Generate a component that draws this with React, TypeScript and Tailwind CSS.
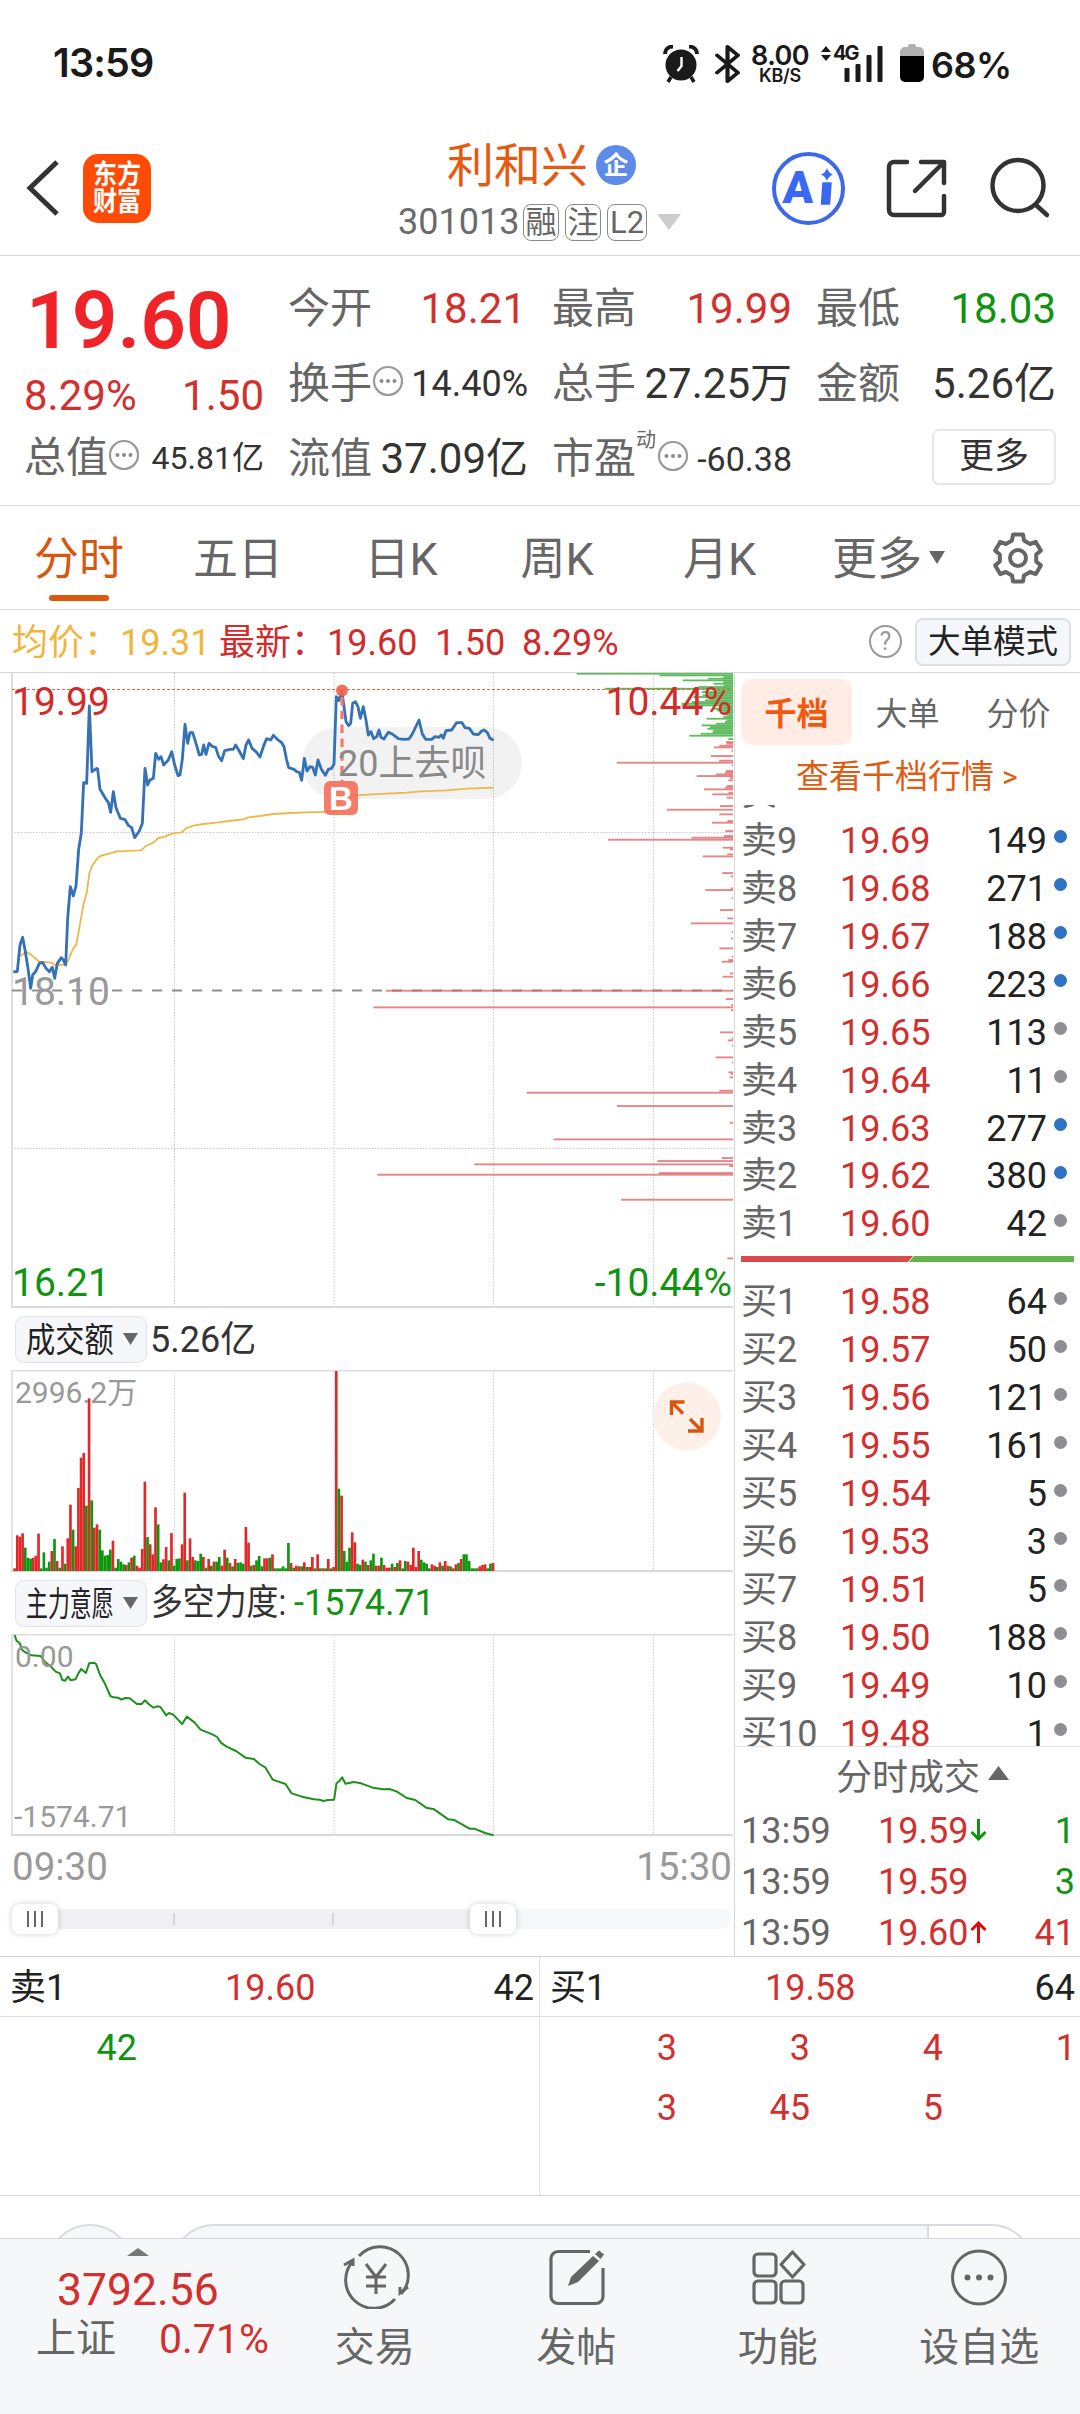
import React from "react";

/* ---------- chart data ---------- */

const PRICE_LINE =
  "40,936 52,934 60,855 68,832 76,875 84,925 92,985 98,945 108,933 118,910 128,907 138,925 148,935 157,922 164,955 172,910 184,893 190,900 197,915 203,775 211,680 220,708 228,678 236,568 244,518 251,368 260,370 268,138 276,335 290,325 293,327 300,388 316,415 325,427 332,457 340,395 348,443 361,475 374,478 386,497 395,503 404,533 418,513 427,490 435,325 443,375 450,360 460,355 467,280 476,298 483,290 491,315 505,300 515,275 524,315 534,347 540,345 547,298 555,193 563,250 570,218 578,218 588,250 598,285 605,283 611,255 618,283 627,250 638,260 647,262 656,290 665,302 674,272 690,268 700,268 707,255 716,270 730,296 738,255 746,240 756,265 768,275 780,291 790,260 800,236 812,240 820,226 832,238 845,248 852,260 860,300 866,323 882,328 890,335 898,337 905,361 913,295 921,333 930,320 938,322 946,345 954,300 964,328 976,346 985,328 995,325 1002,312 1009,110 1017,122 1025,90 1032,140 1038,185 1046,197 1052,190 1058,130 1066,125 1074,140 1081,175 1090,140 1098,180 1105,225 1113,215 1121,236 1130,230 1137,210 1143,232 1152,237 1165,217 1177,222 1195,236 1210,238 1227,237 1237,222 1257,180 1267,222 1277,238 1295,238 1305,230 1317,232 1324,225 1330,235 1338,212 1355,210 1370,188 1386,188 1395,203 1408,205 1420,222 1435,224 1445,213 1453,210 1462,218 1470,235 1481,241";

const AVG_LINE =
  "62,888 78,875 92,883 108,897 118,905 155,908 165,915 195,914 203,905 213,880 220,865 229,853 236,815 244,770 252,725 260,700 268,640 276,618 290,598 300,588 330,580 350,574 420,571 427,569 437,558 460,548 475,534 495,530 515,521 545,517 558,505 580,497 610,492 650,488 685,483 730,478 745,472 780,468 820,462 870,459 920,457 1002,455 1018,430 1030,415 1060,407 1100,404 1220,398 1260,394 1340,391 1400,386 1480,383";

const FORCE_LINE =
  "31,195 35,212 42,220 47,240 55,248 66,256 86,258 95,275 108,290 118,305 127,310 132,330 138,332 144,320 150,331 160,328 166,310 172,297 182,309 189,280 200,278 204,283 212,315 222,340 234,378 240,382 250,383 257,389 265,384 275,385 290,402 300,402 307,391 315,402 325,413 333,409 340,411 352,436 358,429 367,434 386,462 396,440 412,457 425,479 450,493 460,501 468,518 480,530 500,543 520,563 538,567 550,582 562,592 578,629 590,635 605,642 618,670 640,680 665,688 677,689 685,693 695,690 708,689 713,640 720,632 725,622 732,641 750,636 765,640 790,653 812,658 825,657 840,664 862,684 880,690 903,713 920,718 950,748 962,750 995,776 1005,776 1028,789 1046,796";

// [y, left edge] of every price-level bar, in thirds of a pixel
const SELL_DEPTH: number[][] = [
  [41, 890], [46, 1138], [51, 1330], [56, 1284], [61, 1208], [66, 1330], [71, 1300], [76, 1330], [81, 1255], [86, 975],
  [91, 1310], [96, 1265], [101, 1280], [106, 1268], [111, 1240], [116, 1290], [121, 1275], [126, 1235], [131, 1205], [136, 1205],
  [141, 1320], [146, 1300], [151, 1310], [156, 1330], [161, 1345], [166, 1340], [171, 1330], [176, 1280], [181, 1340], [186, 1335],
  [191, 1308], [196, 1265], [201, 1290], [206, 1282], [211, 1300], [216, 1298], [221, 1262], [227, 1228], [237, 1345],
];
const BUY_DEPTH: number[][] = [
  [246, 1338], [251, 1340], [257, 1318], [262, 1302], [272, 1354], [288, 1293], [302, 1317], [308, 1010], [316, 1355],
  [333, 1338], [338, 1335], [343, 1308], [348, 1250], [354, 1350], [361, 1345], [378, 1340], [383, 1335], [388, 1272], [398, 1345],
  [403, 1297], [413, 1340], [438, 1320], [449, 1161], [463, 1318], [483, 1342], [488, 1296], [513, 1336], [528, 1332],
  [533, 1235], [539, 984], [563, 1328], [568, 1350], [583, 1342], [589, 1268], [639, 1327], [649, 1352], [685, 1352],
  [690, 1276], [714, 1355], [750, 1320], [775, 1342], [790, 1233], [815, 1355], [835, 1353], [865, 1318], [890, 1355], [900, 1345], [905, 1325],
  [940, 1350], [950, 1328], [992, 318], [1017, 1338], [1042, 280], [1035, 1354], [1050, 1353], [1117, 1320], [1135, 1355], [1141, 1343],
  [1157, 1356], [1192, 1307], [1207, 1356], [1237, 1345], [1242, 1353], [1252, 1349], [1292, 1318], [1298, 740],
  [1338, 1011], [1388, 1349], [1438, 821], [1494, 1325], [1503, 1132], [1513, 583], [1518, 1348], [1539, 1137],
  [1544, 292], [1619, 1023], [1795, 1342],
];

// height followed by direction, one entry per minute
const VOLUME =
  "8r 107r 103r 113r 70g 39g 37g 40r 46r 112r 8g 56g 10g 28g 60r 96g 30r 10g 74r 22g 98r 199r 124g 74r 249r 340r 354r 196g 518r 212g 130r 140r 124g 62g 46g 48g 64g 91r 10g 36g 28g 20g 18r 26g 40r 46g 16r 10r 66r 268r 102g 80r 50r 191r 140g 26g 35r 72r 32g 114r 16g 36g 38g 80r 235r 32g 98r 42r 32g 30g 52g 42r 10g 36r 16g 28r 28g 42g 16r 64r 40g 24r 14g 36r 24g 26g 22g 132r 85r 16g 18r 32g 45g 14g 38r 38r 40g 50r 8g 8g 8g 14g 8g 84g 24r 10g 16r 14r 14g 26r 12g 12r 42r 8g 50r 8g 8r 8g 36r 8g 12r 600r 247g 226r 60g 28g 70g 116r 86r 22g 18g 34r 28g 18r 32g 52g 16r 16r 40g 18r 10r 10r 22g 12r 24g 32r 8g 30g 28r 18r 70r 12r 60r 34g 26g 22g 8g 20r 16r 12g 26r 16g 30r 16r 14g 8r 20r 24g 36r 50g 50g 30g 8g 8g 8g 14r 18r 20r 8g 22g 24r"
    .split(" ")
    .map((s) => ({ h: parseInt(s, 10) / 3, up: s.endsWith("r") }));

const SELLS: [string, string, string, boolean][] = [
  ["卖10", "", "", false],
  ["卖9", "19.69", "149", true],
  ["卖8", "19.68", "271", true],
  ["卖7", "19.67", "188", true],
  ["卖6", "19.66", "223", true],
  ["卖5", "19.65", "113", false],
  ["卖4", "19.64", "11", false],
  ["卖3", "19.63", "277", true],
  ["卖2", "19.62", "380", true],
  ["卖1", "19.60", "42", false],
];
const BUYS: [string, string, string, boolean][] = [
  ["买1", "19.58", "64", false],
  ["买2", "19.57", "50", false],
  ["买3", "19.56", "121", false],
  ["买4", "19.55", "161", false],
  ["买5", "19.54", "5", false],
  ["买6", "19.53", "3", false],
  ["买7", "19.51", "5", false],
  ["买8", "19.50", "188", false],
  ["买9", "19.49", "10", false],
  ["买10", "19.48", "1", false],
];

/* ---------- icons ---------- */

function AlarmIcon() {
  return (
    <svg width="36" height="38" viewBox="0 0 36 38" fill="none">
      <circle cx="18" cy="20" r="15.500" fill="#1a1a1a" />
      <path d="M2 9C2 5 5 1.500 10 1.500M34 9C34 5 31 1.500 26 1.500" stroke="#1a1a1a" strokeWidth="4" />
      <path d="M8 32l-3 5M28 32l3 5" stroke="#1a1a1a" strokeWidth="3.500" />
      <path d="M18.500 12v9l-4 5" stroke="#fff" strokeWidth="2.400" />
    </svg>
  );
}

function SignalIcon() {
  return (
    <svg width="64" height="38" viewBox="0 0 64 38" fill="#1a1a1a">
      <path d="M6 1l5 6H1zM6 16l5-6H1z" />
      <rect x="24.500" y="23" width="5" height="14" rx="1" />
      <rect x="35.500" y="19" width="5" height="18" rx="1" />
      <rect x="46.500" y="10" width="5" height="27" rx="1" />
      <rect x="57.500" y="1" width="5" height="36" rx="1" />
    </svg>
  );
}

function BatteryIcon() {
  return (
    <svg width="24" height="38" viewBox="0 0 24 38">
      <path d="M8 3a3 3 0 0 1 8 0h3a5 5 0 0 1 5 5v5H0V8a5 5 0 0 1 5-5z" fill="#b0b0b0" />
      <path d="M0 12h24v21a5 5 0 0 1-5 5H5a5 5 0 0 1-5-5z" fill="#000" />
    </svg>
  );
}

function gearPath() {
  const pts: string[] = [];
  const at = (r: number, deg: number) => {
    const a = (deg * Math.PI) / 180;
    pts.push(`${(27 + r * Math.cos(a)).toFixed(1)} ${(27 + r * Math.sin(a)).toFixed(1)}`);
  };
  for (let k = 0; k < 6; k++) {
    const c = k * 60 - 90;
    at(18.5, c - 19);
    at(24, c - 12);
    at(24, c + 12);
    at(18.5, c + 19);
  }
  return "M" + pts.join("L") + "Z";
}

function GearIcon() {
  return (
    <svg width="54" height="54" viewBox="0 0 54 54" fill="none" stroke="#666" strokeWidth="4" strokeLinejoin="round">
      <path d={gearPath()} />
      <circle cx="27" cy="27" r="8" />
    </svg>
  );
}

function DotsIcon() {
  return (
    <svg width="32" height="32" viewBox="0 0 32 32" className="mb-[6px] shrink-0" fill="none">
      <circle cx="16" cy="16" r="14" stroke="#999" strokeWidth="2.200" />
      <g fill="#8a8a8a">
        <circle cx="9.500" cy="16" r="2" />
        <circle cx="16" cy="16" r="2" />
        <circle cx="22.500" cy="16" r="2" />
      </g>
    </svg>
  );
}

function Grip() {
  return (
    <div className="flex h-[30px] w-[46px] items-center justify-center gap-[5px] rounded-lg bg-white shadow-[0_0_6px_rgba(0,0,0,0.18)]">
      <i className="h-4 w-[2px] bg-[#666]" />
      <i className="h-4 w-[2px] bg-[#666]" />
      <i className="h-4 w-[2px] bg-[#666]" />
    </div>
  );
}

/* ---------- sections ---------- */

function StatusBar() {
  return (
    <div className="flex h-[110px] items-start pl-[53px] font-['Inter',sans-serif] text-[#1a1a1a]">
      <div className="mt-[42px] w-[610px] text-[39.500px] leading-[43px] font-semibold tracking-[-0.8px]">13:59</div>
      <div className="mt-[45px] w-[51px]"><AlarmIcon /></div>
      <div className="mt-[45px] w-[36px]">
        <svg width="26" height="38" viewBox="5.500 1 12.500 22" preserveAspectRatio="none" fill="none" stroke="#1a1a1a" strokeWidth="2" strokeLinejoin="round" strokeLinecap="round">
          <path d="m7 7 10 10-5 5V2l5 5L7 17" />
        </svg>
      </div>
      <div className="mt-[43px] w-[60px] text-center font-semibold">
        <div className="text-[27px] leading-[25px] tracking-[-0.6px]">8.00</div>
        <div className="text-[18px] leading-[16px] tracking-[-0.3px]">KB/S</div>
      </div>
      <div className="relative mt-[45px] ml-[10px] w-[80px]">
        <SignalIcon />
        <span className="absolute top-0 left-[13px] text-[20px] leading-[17px] font-bold tracking-[-2px]">4G</span>
      </div>
      <div className="mt-[44px] w-[31px]"><BatteryIcon /></div>
      <div className="mt-[43px] text-[36px] leading-[45px] font-semibold tracking-[-0.5px]">68%</div>
    </div>
  );
}

function Tag({ children, wide }: { children: React.ReactNode; wide?: boolean }) {
  return (
    <span
      className={
        "flex h-[37px] items-center justify-center rounded-[8px] border border-[#8a8a8a] text-[31px] leading-none text-[#666] " +
        (wide ? "w-[40px]" : "w-[36px]")
      }
    >
      {children}
    </span>
  );
}

function Header() {
  return (
    <header className="flex h-[146px] items-start border-b border-[#d6d6d6]">
      <svg className="mt-[49px] ml-[24px]" width="38" height="58" viewBox="0 0 38 58" fill="none" stroke="#333" strokeWidth="5">
        <path d="M33 3L6 29l27 26" />
      </svg>
      <div className="mt-[44px] ml-[21px] flex h-[69px] w-[68px] flex-col items-center justify-center rounded-[15px] bg-[#fe4b05] text-[24px] leading-[25px] font-bold text-white">
        <span className="scale-y-115">东方</span>
        <span className="mt-[2px] scale-y-115">财富</span>
      </div>
      <div className="mt-[26px] ml-[247px] w-[290px]">
        <div className="flex h-[56px] items-center pt-[2px] pl-[49px]">
          <h1 className="text-[47px] leading-none text-[#e55a10]">利和兴</h1>
          <span className="ml-[8px] flex size-[40px] items-center justify-center rounded-full bg-[#5f8be8] text-[25px] leading-none font-bold text-white">企</span>
        </div>
        <div className="flex h-[60px] items-center gap-[6px]">
          <span className="w-[119px] text-[36px] leading-none text-[#6b6b6b]">301013</span>
          <Tag>融</Tag>
          <Tag>注</Tag>
          <Tag wide>L2</Tag>
          <svg className="ml-1" width="24" height="16" viewBox="0 0 24 16"><path d="M0 0h24L12 16z" fill="#ccc" /></svg>
        </div>
      </div>
      <div className="relative mt-[42px] ml-[84px] size-[73px] rounded-full border-[4px] border-[#3d68e8] text-[#3b68f2]">
        <span className="absolute top-[12px] left-[7px] -skew-x-3 text-[45px] leading-[40px] font-black">A</span>
        <svg className="absolute top-[12px] left-[42px]" width="18" height="40" viewBox="0 0 18 40" fill="#3b68f2">
          <path d="M9 0q1.500 5 6 6.500Q10.500 8 9 13q-1.500-5-6-6.500Q7.500 5 9 0z" />
          <path d="M5 15h8l-1.500 21h-8z" stroke="#3b68f2" strokeWidth="1.500" strokeLinejoin="round" />
        </svg>
      </div>
      <svg className="mt-[46px] ml-[38px]" width="70" height="66" viewBox="0 0 70 66" fill="none" stroke="#333" strokeWidth="4.500" strokeLinecap="round" strokeLinejoin="round">
        <path d="M24 6H11a5 5 0 0 0-5 5v43a5 5 0 0 0 5 5h47a3 3 0 0 0 3-3V40" />
        <path d="M38 6h23v21M32 35L60 7" />
      </svg>
      <svg className="mt-[44px] ml-[34px]" width="66" height="66" viewBox="0 0 66 66" fill="none" stroke="#333" strokeWidth="4.500" strokeLinecap="round">
        <circle cx="31" cy="31.500" r="25.500" />
        <path d="M49 51l11 10" />
      </svg>
    </header>
  );
}

const LABEL = "shrink-0 text-[42px] text-[#666]";

function Quote() {
  const cell = "flex h-[75px] items-center justify-between whitespace-nowrap leading-none";
  return (
    <section className="grid h-[250px] grid-cols-4 gap-x-6 border-b border-[#d6d6d6] px-6 leading-none">
      <div className="pt-[27px]">
        <div className="flex h-[75px] items-center pl-[2px] text-[80px] font-semibold text-[#ef2428]">19.60</div>
        <div className="flex h-[75px] items-center justify-between text-[42px] text-[#d2302f]">
          <span>8.29%</span>
          <span>1.50</span>
        </div>
        <div className="flex h-[50px] items-center whitespace-nowrap">
          <span className={LABEL}>总值</span>
          <DotsIcon />
          <span className="ml-auto text-[32px] text-[#333]">45.81亿</span>
        </div>
      </div>
      <div className="pt-[15px]">
        <div className={cell}>
          <span className={LABEL}>今开</span>
          <span className="pr-[2px] text-[42px] text-[#d2302f]">18.21</span>
        </div>
        <div className={cell}>
          <span className="flex items-center"><span className={LABEL}>换手</span><DotsIcon /></span>
          <span className="text-[36px] text-[#333]">14.40%</span>
        </div>
        <div className={cell}>
          <span className={LABEL}>流值</span>
          <span className="text-[42px] text-[#333]">37.09亿</span>
        </div>
      </div>
      <div className="pt-[15px]">
        <div className={cell}>
          <span className={LABEL}>最高</span>
          <span className="text-[42px] text-[#d2302f]">19.99</span>
        </div>
        <div className={cell}>
          <span className={LABEL}>总手</span>
          <span className="text-[42px] text-[#333]">27.25万</span>
        </div>
        <div className={cell}>
          <span className="flex items-center">
            <span className={LABEL}>市盈</span>
            <span className="-mt-[38px] w-[21px] text-[20px] text-[#666]">动</span>
            <DotsIcon />
          </span>
          <span className="text-[34px] text-[#333]">-60.38</span>
        </div>
      </div>
      <div className="pt-[15px]">
        <div className={cell}>
          <span className={LABEL}>最低</span>
          <span className="text-[42px] text-[#109410]">18.03</span>
        </div>
        <div className={cell}>
          <span className={LABEL}>金额</span>
          <span className="text-[42px] text-[#333]">5.26亿</span>
        </div>
        <div className="flex h-[71px] items-center justify-end">
          <button className="h-[56px] w-[124px] rounded-[7px] border-2 border-[#e6e7e9] text-[35px] leading-none text-[#333]">更多</button>
        </div>
      </div>
    </section>
  );
}

function PeriodTabs() {
  const tab = "flex h-full items-center justify-center pt-[4px] text-[45px] leading-none text-[#666]";
  return (
    <nav className="flex h-[104px] items-center border-b border-[#d6d6d6]">
      <div className="relative flex h-full w-[158px] items-center justify-center pt-[4px] text-[45px] leading-none text-[#d9560f]">
        分时
        <i className="absolute bottom-[8px] left-[49px] h-[6px] w-[60px] rounded-full bg-[#dc580e]" />
      </div>
      <div className={tab + " w-[160px]"}>五日</div>
      <div className={tab + " w-[166px]"}>日K</div>
      <div className={tab + " w-[146px]"}>周K</div>
      <div className={tab + " w-[179px]"}>月K</div>
      <div className="flex items-center pt-[4px] pl-[23px] text-[45px] leading-none text-[#666]">
        更多
        <svg className="mb-[4px] ml-[7px]" width="16" height="13" viewBox="0 0 16 13"><path d="M0 0h16L8 13z" fill="#666" /></svg>
      </div>
      <div className="ml-[46px]"><GearIcon /></div>
    </nav>
  );
}

function InfoRow() {
  return (
    <div className="flex h-[63px] items-center border-b border-[#d6d6d6] pt-[1px] pl-[12px] text-[36px] leading-none whitespace-nowrap">
      <span className="w-[207px] pt-[2px] text-[#efb63d]">均价：19.31</span>
      <span className="w-[216px] pt-[2px] text-[#d02c2c]">最新：19.60</span>
      <span className="w-[87px] pt-[2px] text-[#d02c2c]">1.50</span>
      <span className="pt-[2px] text-[#d02c2c]">8.29%</span>
      <div className="ml-auto flex size-[33px] items-center justify-center rounded-full border-[2.500px] border-[#999] text-[25px] text-[#999]">?</div>
      <button className="mr-[9px] ml-[13px] h-[48px] w-[156px] rounded-[8px] border-2 border-[#dcdfe3] bg-[#f6f7fa] pt-[2px] text-[32.500px] leading-none text-[#222]">大单模式</button>
    </div>
  );
}

function PriceChart() {
  return (
    <div className="relative h-[635px]">
      <svg className="block" width="734" height="635" viewBox="0 673 734 635" fill="none">
        <g stroke="#c9c9c9" strokeWidth="1" strokeDasharray="1.500 1.500">
          <path d="M174.500 673V1307M334 673V1307M493.500 673V1307M653.500 673V1307" />
          <path d="M12 832.500H733M12 1148.500H733" />
        </g>
        <path d="M12 673V1307" stroke="#dedede" strokeWidth="2" />
        <path d="M11 1307H733" stroke="#d9d9d9" strokeWidth="2" />
        <rect x="302" y="727" width="220" height="72" rx="36" fill="#000" fillOpacity="0.05" />
        <path d="M12 990.600H733" stroke="#8f8f8f" strokeWidth="2" strokeDasharray="10 10" />
        {SELL_DEPTH.map(([y, x], i) => (
          <rect key={i} x={280 + x / 3} y={660 + y / 3 - 0.85} width={(1359 - x) / 3} height="1.800" fill="#5dbb5d" />
        ))}
        {BUY_DEPTH.map(([y, x], i) => (
          <rect key={i} x={280 + x / 3} y={660 + y / 3 - 0.9} width={(1359 - x) / 3} height="1.900" fill="#e06464" fillOpacity="0.78" />
        ))}
        <path d="M12 689.500H733" stroke="#c8743a" strokeWidth="1.200" strokeDasharray="3 2" />
        <g transform="translate(0 660) scale(0.33333)">
          <polyline points={AVG_LINE} stroke="#ecb84c" strokeWidth="5.500" strokeLinejoin="round" />
          <polyline points={PRICE_LINE} stroke="#3572b5" strokeWidth="8.500" strokeLinejoin="round" />
        </g>
        <path d="M342 697V781" stroke="#ef7a6e" strokeWidth="3.200" strokeDasharray="8.500 5.300" />
        <circle cx="342" cy="690.500" r="6" fill="#f0604c" fillOpacity="0.9" />
        <rect x="324" y="781" width="34" height="34" rx="6" fill="#f5705c" fillOpacity="0.92" />
      </svg>
      <span className="absolute top-[108px] left-[324px] w-[34px] text-center font-['Liberation_Sans',sans-serif] text-[33px] leading-[35px] font-bold text-white">B</span>
      <span className="absolute top-[71px] left-[338px] text-[36px] leading-[40px] whitespace-nowrap text-[#888]">20上去呗</span>
      <span className="absolute top-[9px] left-[12px] text-[39px] leading-[40px] text-[#d42a2a]">19.99</span>
      <span className="absolute top-[9px] right-[2px] text-[39px] leading-[40px] text-[#d42a2a]">10.44%</span>
      <span className="absolute top-[299px] left-[12px] text-[39px] leading-[40px] text-[#999]">18.10</span>
      <span className="absolute top-[590px] left-[12px] text-[39px] leading-[40px] text-[#109410]">16.21</span>
      <span className="absolute top-[590px] right-[2px] text-[39px] leading-[40px] text-[#109410]">-10.44%</span>
    </div>
  );
}

function Picker({ label, narrow }: { label: string; narrow?: boolean }) {
  return (
    <div className="flex h-[47px] w-[132px] items-center rounded-[9px] border border-[#e0e2e6] bg-[#f6f7fa] pl-[10px]">
      <span className="w-[97px] pt-[1px] text-[34px] leading-none whitespace-nowrap text-[#222]">
        <span className={"inline-block origin-left " + (narrow ? "scale-x-[0.645]" : "scale-x-[0.86]")}>{label}</span>
      </span>
      <svg className="shrink-0" width="15" height="12" viewBox="0 0 15 12"><path d="M0 0h15L7.500 12z" fill="#666" /></svg>
    </div>
  );
}

function SubGrid({ top, height }: { top: number; height: number }) {
  return (
    <g>
      <path
        d={`M174.500 ${top}v${height}M334 ${top}v${height}M493.500 ${top}v${height}M653.500 ${top}v${height}`}
        stroke="#cfcfcf"
        strokeDasharray="1.500 1.500"
      />
      <path d={`M733 ${top + 0.7}H12V${top + height - 1}`} stroke="#dedede" strokeWidth="1.600" />
      <path d={`M11 ${top + height - 1}H733`} stroke="#d9d9d9" strokeWidth="2" />
    </g>
  );
}

function VolumeChart() {
  return (
    <div>
      <div className="flex h-[62px] items-center pl-[15px] text-[36px] leading-none text-[#333]">
        <Picker label="成交额" />
        <span className="ml-[3px] pt-[1px]">5.26亿</span>
      </div>
      <div className="relative h-[202px]">
        <svg className="block" width="734" height="202" viewBox="0 1370 734 202" fill="none">
          <SubGrid top={1370} height={202} />
          {VOLUME.map((b, i) => (
            <rect key={i} x={13.3 + i * 2.658} y={1571 - b.h} width="2.660" height={b.h} fill={b.up ? "#e02828" : "#0c980c"} />
          ))}
          <circle cx="687" cy="1416.500" r="34" fill="#fdf0e9" />
          <path d="M671.500 1415v-13h13M672 1402.500L683 1413.500M688 1431h14v-13M702 1431L690 1419" stroke="#d9560f" strokeWidth="3.400" />
        </svg>
        <span className="absolute top-[7px] left-[15px] text-[30px] leading-[32px] text-[#999]">2996.2万</span>
      </div>
    </div>
  );
}

function ForceChart() {
  return (
    <div>
      <div className="flex h-[62px] items-center pl-[15px] text-[36px] leading-none whitespace-nowrap text-[#333]">
        <Picker label="主力意愿" narrow />
        <span className="ml-[4px] w-[143px]"><span className="inline-block origin-left scale-x-[0.885]">多空力度:</span></span>
        <span className="text-[#109410]">-1574.71</span>
      </div>
      <div className="relative h-[202px]">
        <svg className="block" width="734" height="202" viewBox="0 1634 734 202" fill="none">
          <SubGrid top={1634} height={202} />
          <g transform="translate(0 1570) scale(0.47192 0.33333)">
            <polyline points={FORCE_LINE} stroke="#1d8f1d" strokeWidth="2" vectorEffect="non-scaling-stroke" strokeLinejoin="round" />
          </g>
        </svg>
        <span className="absolute top-[7px] left-[15px] text-[30px] leading-[32px] text-[#999]">0.00</span>
        <span className="absolute top-[167px] left-[14px] text-[30px] leading-[32px] text-[#999]">-1574.71</span>
      </div>
    </div>
  );
}

function TimeRange() {
  return (
    <div>
      <div className="flex h-[62px] items-center justify-between pr-[2px] pl-[12px] text-[38.500px] leading-none text-[#999]">
        <span>09:30</span>
        <span>15:30</span>
      </div>
      <div className="relative mt-[6px] mr-[3px] ml-[12px] flex h-[30px] items-center">
        <div className="flex h-5 w-full items-center rounded-[8px] bg-[#f7f8fa]">
          <div className="flex h-5 w-[481px] items-center bg-[#f0f0f3]">
            <i className="ml-[161px] h-3 w-[2px] bg-[#d6d6d9]" />
            <i className="ml-[157px] h-3 w-[2px] bg-[#d6d6d9]" />
          </div>
        </div>
        <div className="absolute top-0 left-0"><Grip /></div>
        <div className="absolute top-0 left-[458px]"><Grip /></div>
      </div>
    </div>
  );
}

function BookRow({ row }: { row: [string, string, string, boolean] }) {
  const [label, price, vol, big] = row;
  return (
    <div className="flex h-[47.950px] items-center pt-[3px] pl-[6px] text-[36px] leading-none">
      <span className="w-[99px] text-[#666]">{label}</span>
      <span className="w-[91px] text-[#d2302f]">{price}</span>
      <span className="w-[116px] text-right text-[#222]">{vol}</span>
      <i className={"mb-[8px] ml-[7px] size-[13px] rounded-full " + (big ? "bg-[#2f72c0]" : "bg-[#8e8e93]")} />
    </div>
  );
}

function OrderBook() {
  return (
    <aside className="h-full w-[345px]">
      <div className="flex h-[72px] items-end pl-[6px] text-[32px] leading-none text-[#666]">
        <div className="flex h-[66px] w-[111px] items-center justify-center rounded-[12px] bg-[#ffede5] pt-[4px] font-bold text-[#f2580f]">千档</div>
        <div className="flex h-[66px] w-[111px] items-center justify-center pt-[4px]">大单</div>
        <div className="flex h-[66px] w-[111px] items-center justify-center pt-[4px]">分价</div>
      </div>
      <div className="flex h-[60px] items-center pt-[3px] pl-[61px] text-[33px] leading-none whitespace-nowrap text-[#e05c12]">
        <span className="w-[206px]">查看千档行情</span>
        <span className="text-[30px]">&gt;</span>
      </div>
      <div className="h-[942px] overflow-hidden border-b border-[#e4e4e4]">
        <div className="-mt-[37.500px]">
          {SELLS.map((r) => <BookRow key={r[0]} row={r} />)}
        </div>
        <div className="flex h-[30px] items-center pb-[6px] pl-[6px]">
          <svg width="333" height="6" viewBox="0 0 333 6">
            <path d="M0 0h172l-5 6H0z" fill="#dc4b4b" />
            <path d="M173 0h160v6H168z" fill="#60b54c" />
          </svg>
        </div>
        {BUYS.map((r) => <BookRow key={r[0]} row={r} />)}
      </div>
      <div className="flex h-[58px] items-center justify-center pt-[3px] pl-[30px] text-[36px] leading-none text-[#666]">
        分时成交
        <svg className="mb-[10px] ml-[8px]" width="21" height="14" viewBox="0 0 21 14"><path d="M0 14h21L10.500 0z" fill="#666" /></svg>
      </div>
      {[
        ["19.59", "down", "1"],
        ["19.59", "", "3"],
        ["19.60", "up", "41"],
      ].map(([p, dir, q], i) => (
        <div key={i} className="flex h-[50.700px] items-center pt-[2px] pr-[5px] pl-[6px] text-[36px] leading-none">
          <span className="w-[137px] text-[#666]">13:59</span>
          <span className="w-[92px] text-[#d2302f]">{p}</span>
          {dir && (
            <svg className="mb-[2px]" width="17" height="22" viewBox="0 0 17 22" fill="none" stroke={dir === "up" ? "#d80f0f" : "#109410"} strokeWidth="3">
              <path d={dir === "up" ? "M8.500 22V2M1.500 9l7-7 7 7" : "M8.500 0v20M1.500 13l7 7 7-7"} />
            </svg>
          )}
          <span className={"ml-auto " + (dir === "up" ? "text-[#d2302f]" : "text-[#109410]")}>{q}</span>
        </div>
      ))}
    </aside>
  );
}

function Queue({ label, price, total, rows, tone, edge }: { label: string; price: string; total: string; rows: string[][]; tone: string; edge: string }) {
  return (
    <div className={"h-full w-[540px] text-[36px] leading-none " + edge}>
      <div className="flex h-[60px] items-center border-b border-[#dedede] pt-[2px] text-[#222]">
        <span className="w-[225px] pl-[10px]">{label}</span>
        <span className="text-[#d2302f]">{price}</span>
        <span className="ml-auto pr-[5px]">{total}</span>
      </div>
      {rows.map((r, i) => (
        <div key={i} className={"flex h-[60px] items-center pt-[2px] pl-[4px] " + tone}>
          {r.map((n, j) => <span key={j} className="w-[133px] text-right">{n}</span>)}
        </div>
      ))}
    </div>
  );
}

function BottomBar() {
  const item = "flex w-[201.500px] flex-col items-center text-[40px] leading-none text-[#666]";
  return (
    <footer className="flex h-[176px] border-t border-[#d3d5d9] bg-[#f6f7f9]">
      <div className="w-[274px] leading-none">
        <svg className="mt-[9px] ml-[127px]" width="22" height="8" viewBox="0 0 22 8"><path d="M0 8h22L11 0z" fill="#777" /></svg>
        <div className="mt-[12px] pl-[57px] text-[44.500px] text-[#d2302f]">3792.56</div>
        <div className="mt-[5px] flex items-center">
          <span className="w-[159px] pl-[36px] text-[40px] text-[#666]">上证</span>
          <span className="pt-[1px] text-[41px] text-[#d2302f]">0.71%</span>
        </div>
      </div>
      <div className={item}>
        <svg className="mt-[6px] mb-[19px] ml-[2px]" width="70" height="64" viewBox="0 0 70 64" fill="none" stroke="#666" strokeWidth="3">
          <path d="M18 11a28 28 0 0 1 42 38M54 54a28 28 0 0 1-42-38" />
          <path d="M3 20l9-5v6M67 42l-8 6v-6" />
          <path d="M25 19l10 13 10-13M25 32h20M25 41h20M35 32v17" />
        </svg>
        交易
      </div>
      <div className={item}>
        <svg className="mt-[6px] mb-[19px] ml-[2px]" width="64" height="64" viewBox="0 0 64 64" fill="none" stroke="#666" strokeWidth="3.200">
          <path d="M45 6.500H13a7 7 0 0 0-7 7v38a7 7 0 0 0 7 7h38a7 7 0 0 0 7-7V23" />
          <path d="M23 41l3-9L48 11l6 5-21 21z" fill="#666" stroke="none" />
          <path d="M50 9l4-3.500 5 4-3.500 4.500z" fill="#666" stroke="none" />
        </svg>
        发帖
      </div>
      <div className={item}>
        <svg className="mt-[6px] mb-[19px] ml-[2px]" width="64" height="64" viewBox="0 0 64 64" fill="none" stroke="#666" strokeWidth="3.200" strokeLinejoin="round">
          <rect x="7" y="9" width="22" height="22" rx="4" />
          <rect x="7" y="36" width="22" height="22" rx="4" />
          <rect x="34" y="36" width="22" height="22" rx="4" />
          <path d="M45.500 7l11.500 12.500L45.500 32 34 19.500z" />
        </svg>
        功能
      </div>
      <div className={item}>
        <svg className="mt-[6px] mb-[19px]" width="64" height="64" viewBox="0 0 64 64" fill="none">
          <circle cx="32" cy="32.500" r="26.500" stroke="#666" strokeWidth="3" />
          <g fill="#666">
            <circle cx="20.500" cy="32.500" r="3" />
            <circle cx="32" cy="32.500" r="3" />
            <circle cx="43.500" cy="32.500" r="3" />
          </g>
        </svg>
        设自选
      </div>
    </footer>
  );
}

export default function App() {
  return (
    <div className="h-[2414px] w-[1080px] overflow-hidden bg-white font-['Roboto','Noto_Sans_CJK_SC',sans-serif]">
      <StatusBar />
      <Header />
      <Quote />
      <PeriodTabs />
      <InfoRow />
      <main className="flex h-[1284px] border-b border-[#d3d3d3]">
        <div className="w-[735px] border-r border-[#d6d6d6]">
          <PriceChart />
          <VolumeChart />
          <ForceChart />
          <TimeRange />
        </div>
        <OrderBook />
      </main>
      <section className="flex h-[239px] border-b border-[#d6d6d6]">
        <Queue label="卖1" price="19.60" total="42" rows={[["42"]]} tone="text-[#109410]" edge="border-r border-[#e2e2e2]" />
        <Queue label="买1" price="19.58" total="64" rows={[["3", "3", "4", "1"], ["3", "45", "5"]]} tone="text-[#d2302f]" edge="" />
      </section>
      <div className="flex h-[42px] items-start overflow-hidden pt-[28px]">
        <div className="ml-[47px] size-[86px] shrink-0 rounded-full border-2 border-[#d8dade] bg-[#f6f7f9]" />
        <div className="ml-[38px] flex h-[86px] w-[863px] shrink-0 overflow-hidden rounded-full border-2 border-[#d8dade] bg-[#f6f7f9]">
          <div className="w-[756px] border-r-2 border-[#d8dade]" />
          <div className="flex-1 bg-white" />
        </div>
      </div>
      <BottomBar />
    </div>
  );
}
